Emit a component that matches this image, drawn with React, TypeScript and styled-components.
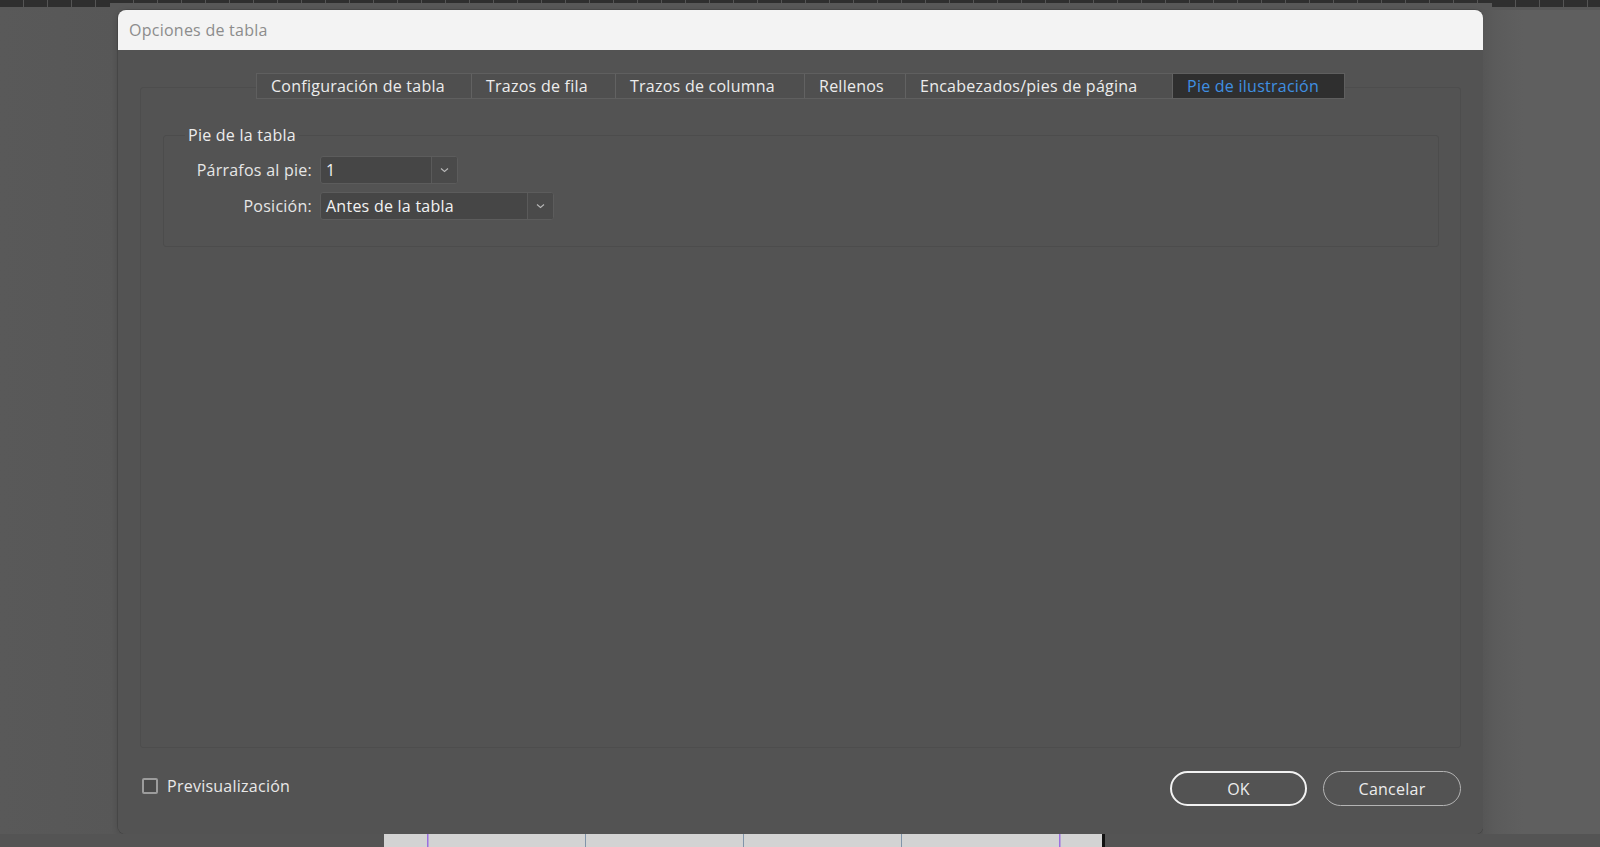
import React from "react";
import styled, { createGlobalStyle } from "styled-components";

const GlobalStyle = createGlobalStyle`
  html, body {
    margin: 0;
    padding: 0;
    background: #585858;
    overflow: hidden;
  }
  body {
    font-family: "Open Sans", "Noto Sans", sans-serif;
  }
`;

const Page = styled.div`
  width: 1600px;
  height: 847px;
  display: flex;
  flex-direction: column;
`;

const RulerRow = styled.div`
  height: 10px;
  display: flex;
  align-items: flex-start;
`;

const RulerPiece = styled.div<{ $w?: number; $h: number }>`
  height: ${(p) => p.$h}px;
  ${(p) => (p.$w ? `width: ${p.$w}px;` : "flex: 1;")}
  background-color: #2f2f2f;
  background-image: repeating-linear-gradient(
    to right,
    transparent 0,
    transparent 23px,
    #555 23px,
    #555 24px
  );
`;

const Desk = styled.div`
  display: flex;
  height: 824px;
`;

const Gutter = styled.div`
  width: 118px;
  background: linear-gradient(to right, #595959, #575757);
`;

const RightSide = styled.div`
  flex: 1;
  background: linear-gradient(to right, #565656 0, #5b5b5b 12px, #5f5f5f 40px, #5f5f5f 100%);
`;

const Dialog = styled.div`
  width: 1365px;
  display: flex;
  flex-direction: column;
  border-radius: 8px;
  overflow: hidden;
  box-shadow: 0 0 0 1px rgba(0, 0, 0, 0.12), 0 2px 6px rgba(0, 0, 0, 0.18);
`;

const TitleBar = styled.div`
  height: 40px;
  flex-shrink: 0;
  display: flex;
  align-items: center;
  padding-left: 11px;
  background: #f3f3f3;
  color: #8c8c8c;
  font-size: 16px;
  letter-spacing: 0.25px;
`;

const DialogBody = styled.div`
  flex: 1;
  display: flex;
  flex-direction: column;
  padding: 23px 22px 0 22px;
  background: #535353;
  color: #e6e6e6;
  font-size: 16px;
  letter-spacing: 0.25px;
`;

const TabBar = styled.div`
  position: relative;
  z-index: 1;
  align-self: center;
  display: flex;
  height: 26px;
  margin-bottom: -12px;
  border: 1px solid #5f5f5f;
  box-sizing: border-box;
  background: #4f4f4f;
`;

const Tab = styled.div<{ $w: number; $active?: boolean }>`
  width: ${(p) => p.$w}px;
  box-sizing: border-box;
  display: flex;
  align-items: center;
  padding-left: 14px;
  white-space: nowrap;
  border-left: 1px solid #626262;
  background: ${(p) => (p.$active ? "#2f2f2f" : "#4f4f4f")};
  color: ${(p) => (p.$active ? "#3f8fe2" : "#ececec")};
  &:first-child {
    border-left: none;
  }
`;

const TabPanel = styled.div`
  height: 661px;
  box-sizing: border-box;
  border: 1px solid #4d4d4d;
  border-radius: 3px;
  padding: 37px 21px 0 22px;
`;

const GroupBox = styled.fieldset`
  margin: 0;
  min-inline-size: 0;
  padding: 11px 0 26px 0;
  border: 1px solid #4c4c4c;
  border-radius: 3px;
`;

const GroupTitle = styled.legend`
  margin-left: 21px;
  padding: 0 3px;
  line-height: 20px;
  color: #ececec;
`;

const FieldGrid = styled.div`
  display: grid;
  grid-template-columns: 148px auto;
  column-gap: 8px;
  row-gap: 8px;
  align-items: center;
  justify-items: start;
`;

const FieldLabel = styled.label`
  justify-self: end;
  color: #e6e6e6;
  white-space: nowrap;
`;

const Select = styled.div<{ $w: number }>`
  width: ${(p) => p.$w}px;
  height: 28px;
  box-sizing: border-box;
  display: flex;
  border: 1px solid #5c5c5c;
  border-radius: 3px;
  background: #464646;
  overflow: hidden;
`;

const SelectValue = styled.div`
  flex: 1;
  display: flex;
  align-items: center;
  padding-left: 5px;
  color: #f2f2f2;
`;

const SelectArrow = styled.div`
  width: 25px;
  display: flex;
  align-items: center;
  justify-content: center;
  border-left: 1px solid #5a5a5a;
  background: #4a4a4a;
`;

const Footer = styled.div`
  height: 86px;
  display: flex;
  align-items: flex-start;
  justify-content: space-between;
  padding: 23px 0 0 2px;
  box-sizing: border-box;
`;

const CheckRow = styled.label`
  display: flex;
  align-items: center;
  gap: 9px;
  margin-top: 4px;
  color: #e8e8e8;
`;

const CheckBox = styled.span`
  width: 16px;
  height: 16px;
  box-sizing: border-box;
  border: 2px solid #9c9c9c;
  border-radius: 2px;
  background: #4a4a4a;
`;

const Buttons = styled.div`
  display: flex;
  gap: 16px;
`;

const Button = styled.button<{ $primary?: boolean }>`
  width: ${(p) => (p.$primary ? 137 : 138)}px;
  height: 35px;
  box-sizing: border-box;
  border-radius: 18px;
  border: ${(p) => (p.$primary ? "2px solid #f2f2f2" : "1.5px solid #b4b4b4")};
  background: transparent;
  color: #ececec;
  font-family: inherit;
  font-size: 16px;
  letter-spacing: 0.25px;
  padding: 0;
`;

const BottomRow = styled.div`
  height: 13px;
  display: flex;
  background: #545454;
`;

const DocStrip = styled.svg`
  margin-left: 384px;
  display: block;
`;

const Chevron = () => (
  <svg width="9" height="6" viewBox="0 0 9 6">
    <polyline points="1,1.5 4.5,4.5 8,1.5" fill="none" stroke="#b8b8b8" strokeWidth="1.1" />
  </svg>
);

const Dropdown: React.FC<{ width: number; value: string }> = ({ width, value }) => (
  <Select $w={width}>
    <SelectValue>{value}</SelectValue>
    <SelectArrow>
      <Chevron />
    </SelectArrow>
  </Select>
);

const tabs = [
  { label: "Configuración de tabla", w: 214 },
  { label: "Trazos de fila", w: 144 },
  { label: "Trazos de columna", w: 189 },
  { label: "Rellenos", w: 101 },
  { label: "Encabezados/pies de página", w: 267 },
  { label: "Pie de ilustración", w: 172, active: true }
];

const App: React.FC = () => (
  <Page>
    <GlobalStyle />
    <RulerRow>
      <RulerPiece $w={110} $h={7} />
      <RulerPiece $h={3} />
      <RulerPiece $w={108} $h={7} />
    </RulerRow>
    <Desk>
      <Gutter />
      <Dialog>
        <TitleBar>Opciones de tabla</TitleBar>
        <DialogBody>
          <TabBar>
            {tabs.map((t) => (
              <Tab key={t.label} $w={t.w} $active={t.active}>
                {t.label}
              </Tab>
            ))}
          </TabBar>
          <TabPanel>
            <GroupBox>
              <GroupTitle>Pie de la tabla</GroupTitle>
              <FieldGrid>
                <FieldLabel>Párrafos al pie:</FieldLabel>
                <Dropdown width={138} value="1" />
                <FieldLabel>Posición:</FieldLabel>
                <Dropdown width={234} value="Antes de la tabla" />
              </FieldGrid>
            </GroupBox>
          </TabPanel>
          <Footer>
            <CheckRow>
              <CheckBox />
              Previsualización
            </CheckRow>
            <Buttons>
              <Button $primary>OK</Button>
              <Button>Cancelar</Button>
            </Buttons>
          </Footer>
        </DialogBody>
      </Dialog>
      <RightSide />
    </Desk>
    <BottomRow>
      <DocStrip width="721" height="13" viewBox="0 0 721 13">
        <rect x="0" y="0" width="721" height="13" fill="#d3d3d3" />
        <rect x="43" y="0" width="1.5" height="13" fill="#9b6fe0" />
        <rect x="201" y="0" width="1" height="13" fill="#8094aa" />
        <rect x="359" y="0" width="1" height="13" fill="#8094aa" />
        <rect x="517" y="0" width="1" height="13" fill="#8094aa" />
        <rect x="675" y="0" width="1.5" height="13" fill="#9b6fe0" />
        <rect x="718" y="0" width="3" height="13" fill="#111" />
      </DocStrip>
    </BottomRow>
  </Page>
);

export default App;
